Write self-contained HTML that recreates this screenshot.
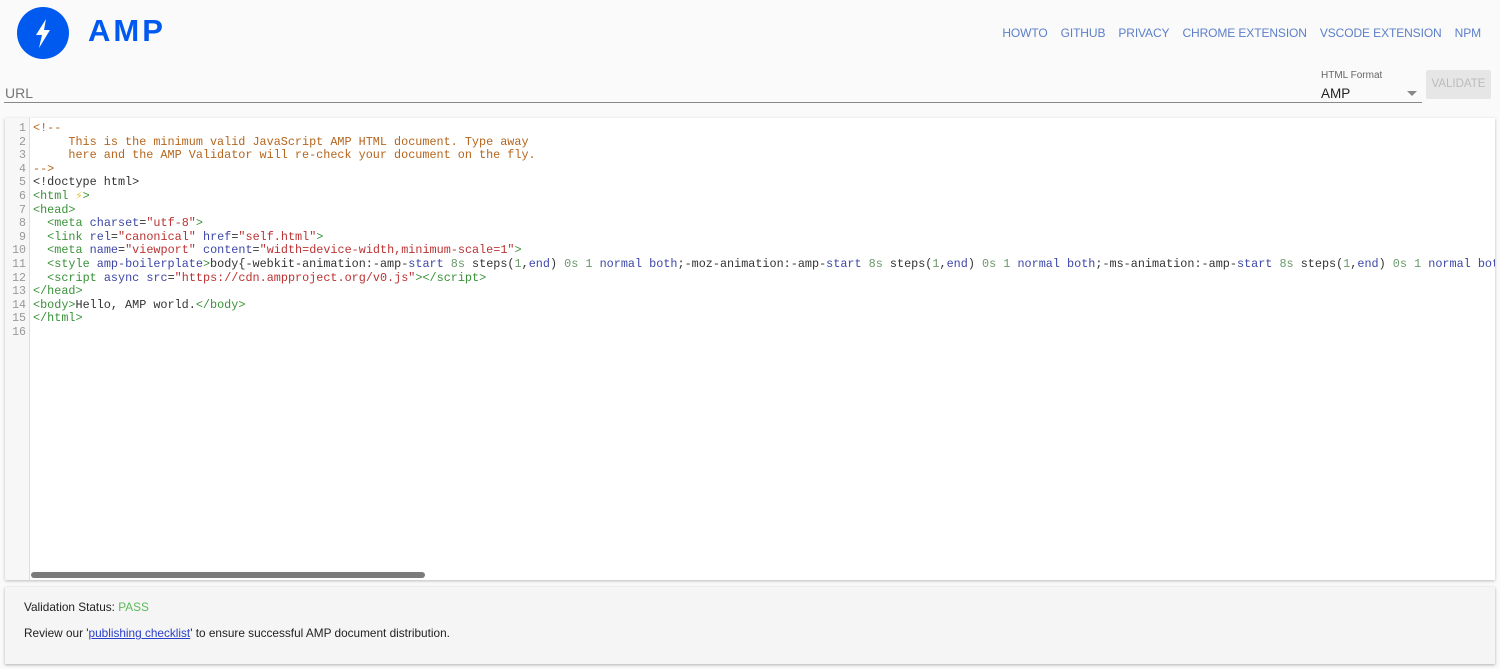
<!DOCTYPE html>
<html><head><style>
body{margin:0;background:#fafafa;font-family:"Liberation Sans",sans-serif;width:1500px;height:669px;overflow:hidden;position:relative}
.logo{position:absolute;left:17px;top:7px;width:52px;height:52px;border-radius:50%;background:#005af0}
.amp{position:absolute;left:88px;top:13px;font-size:31px;font-weight:bold;color:#005af0;letter-spacing:3px}
.nav{position:absolute;top:26px;right:19px;font-size:12px;color:#5c7fc9;letter-spacing:-.1px}
.nav span{margin-left:13px}
.url{position:absolute;left:5px;top:85px;font-size:14px;color:#777}
.uline{position:absolute;left:4px;top:102px;width:1418px;height:1px;background:#888}
.fmtl{position:absolute;left:1321px;top:70px;font-size:10px;color:#666}
.fmt{position:absolute;left:1321px;top:86px;font-size:13.5px;color:#222}
.caret{position:absolute;left:1407px;top:91px;border-left:5px solid transparent;border-right:5px solid transparent;border-top:5px solid #888}
.val{position:absolute;left:1426px;top:70px;width:65px;height:29px;background:#e6e6e6;color:#bbb;font-size:11.5px;text-align:center;line-height:29px;border-radius:2px}
.ed{position:absolute;left:5px;top:118px;width:1490px;height:462px;background:#fff;box-shadow:0 1px 3px rgba(0,0,0,.25);overflow:hidden}
.gut{position:absolute;left:0;top:0;width:24px;height:100%;background:#f7f7f7;border-right:1px solid #ddd}
.ln{position:absolute;left:0;top:4px;width:21px;text-align:right;font:11.6px/13.6px "Liberation Mono",monospace;color:#999}
.code{position:absolute;left:28px;top:4px;font:11.8px/13.6px "Liberation Mono",monospace;color:#333;white-space:pre}
.c{color:#b5651d}.t{color:#3a923a}.a{color:#3d47a8}.s{color:#b33}.n{color:#6a9a6a}.k{color:#3d47a8}
.sb{position:absolute;left:26px;top:454px;width:394px;height:6px;border-radius:3px;background:#7b7b7b}
.ft{position:absolute;left:5px;top:587px;width:1490px;height:77px;background:#f5f5f5;box-shadow:0 1px 3px rgba(0,0,0,.3);font-size:11.8px;color:#222}
.ft a{color:#2a3fc8;text-decoration:underline}
</style></head><body>
<div class="logo"><svg width="52" height="52" viewBox="0 0 52 52"><path d="M29 12 L19 28 L25 28 L22 41 L33 23 L27 23 Z" fill="#fff"/></svg></div>
<div class="amp">AMP</div>
<div class="nav"><span>HOWTO</span><span>GITHUB</span><span>PRIVACY</span><span>CHROME EXTENSION</span><span>VSCODE EXTENSION</span><span>NPM</span></div>
<div class="url">URL</div><div class="uline"></div>
<div class="fmtl">HTML Format</div><div class="fmt">AMP</div><div class="caret"></div>
<div class="val">VALIDATE</div>
<div class="ed"><div class="gut"></div>
<div class="ln">1<br>2<br>3<br>4<br>5<br>6<br>7<br>8<br>9<br>10<br>11<br>12<br>13<br>14<br>15<br>16</div>
<div class="code"><span class="c">&lt;!--
     This is the minimum valid JavaScript AMP HTML document. Type away
     here and the AMP Validator will re-check your document on the fly.
--&gt;</span>
&lt;!doctype html&gt;
<span class="t">&lt;html</span> <span style="color:#e8c030">⚡</span><span class="t">&gt;</span>
<span class="t">&lt;head&gt;</span>
  <span class="t">&lt;meta</span> <span class="a">charset</span>=<span class="s">"utf-8"</span><span class="t">&gt;</span>
  <span class="t">&lt;link</span> <span class="a">rel</span>=<span class="s">"canonical"</span> <span class="a">href</span>=<span class="s">"self.html"</span><span class="t">&gt;</span>
  <span class="t">&lt;meta</span> <span class="a">name</span>=<span class="s">"viewport"</span> <span class="a">content</span>=<span class="s">"width=device-width,minimum-scale=1"</span><span class="t">&gt;</span>
  <span class="t">&lt;style</span> <span class="a">amp-boilerplate</span><span class="t">&gt;</span>body{-webkit-animation:-amp-<span class="k">start</span> <span class="n">8s</span> steps(<span class="n">1</span>,<span class="k">end</span>) <span class="n">0s</span> <span class="n">1</span> <span class="k">normal</span> <span class="k">both</span>;-moz-animation:-amp-<span class="k">start</span> <span class="n">8s</span> steps(<span class="n">1</span>,<span class="k">end</span>) <span class="n">0s</span> <span class="n">1</span> <span class="k">normal</span> <span class="k">both</span>;-ms-animation:-amp-<span class="k">start</span> <span class="n">8s</span> steps(<span class="n">1</span>,<span class="k">end</span>) <span class="n">0s</span> <span class="n">1</span> <span class="k">normal</span> <span class="k">both</span>
  <span class="t">&lt;script</span> <span class="a">async</span> <span class="a">src</span>=<span class="s">"https://cdn.ampproject.org/v0.js"</span><span class="t">&gt;&lt;/script&gt;</span>
<span class="t">&lt;/head&gt;</span>
<span class="t">&lt;body&gt;</span>Hello, AMP world.<span class="t">&lt;/body&gt;</span>
<span class="t">&lt;/html&gt;</span>
</div>
<div class="sb"></div></div>
<div class="ft"><div style="position:absolute;left:19px;top:13px">Validation Status: <span style="color:#5cb85c">PASS</span></div>
<div style="position:absolute;left:19px;top:39px">Review our '<a>publishing checklist</a>' to ensure successful AMP document distribution.</div></div>
</body></html>
